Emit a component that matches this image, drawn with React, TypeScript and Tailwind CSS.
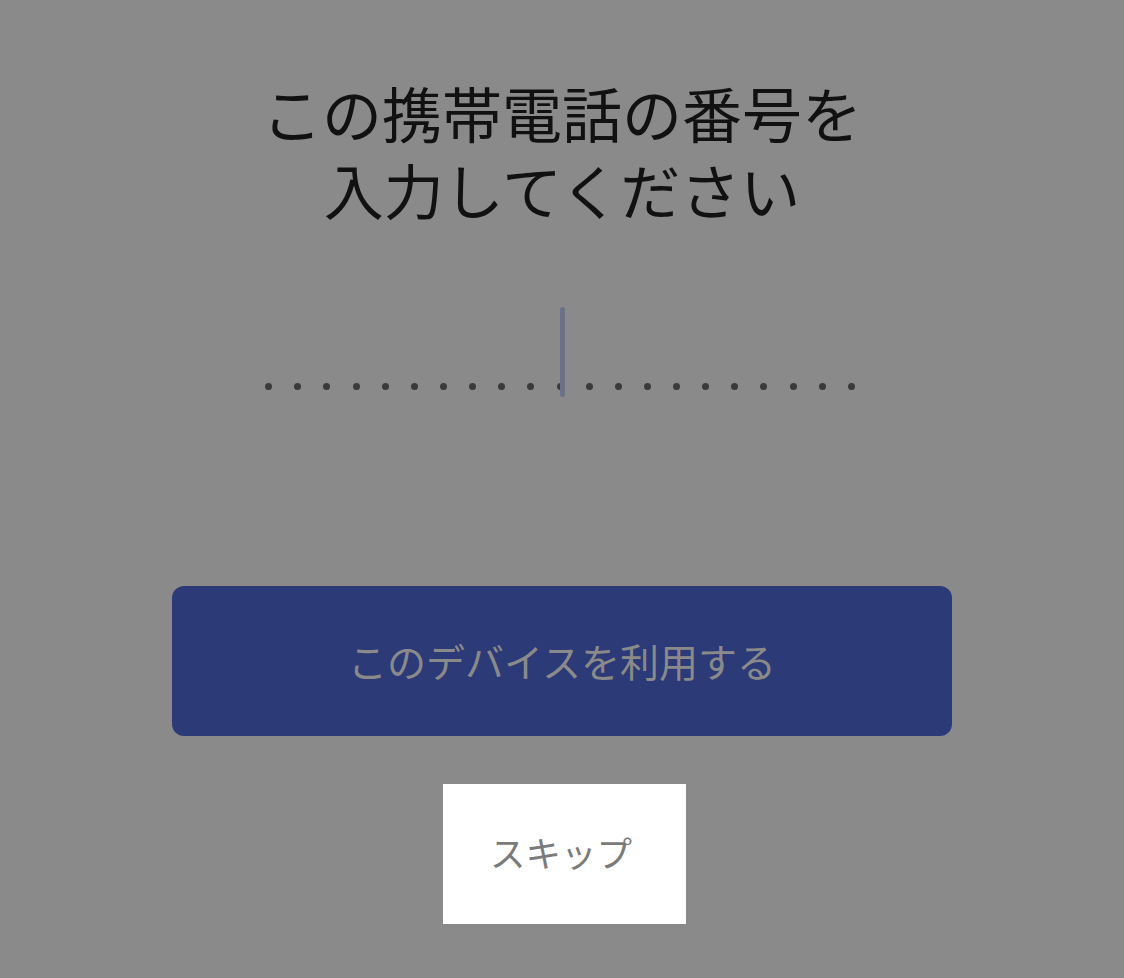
import * as React from 'react';

const DOT_COUNT = 21;

export default function App() {
  const font = { fontFamily: '"Noto Sans CJK JP", "Noto Sans", sans-serif' };

  return (
    <div className="w-[1124px] h-[978px] bg-[#8a8a8a] flex flex-col items-center" style={font}>
      <h1 className="mt-[73px] text-[60px] leading-[77px] text-[#111111] text-center font-normal">
        この携帯電話の番号を
        <br />
        入力してください
      </h1>

      <div className="relative mt-[79px] h-[100px] w-[600px] flex items-end justify-center pr-[4px]">
        <div className="flex items-center gap-[22.15px] mb-[16px]">
          {Array.from({ length: DOT_COUNT }).map((_, i) => (
            <span key={i} className="block w-[7px] h-[7px] rounded-full bg-[#3a3a3a]" />
          ))}
        </div>
        <span className="absolute left-[298px] top-[1px] w-[5px] h-[90px] rounded-full bg-[#6b7189]" />
      </div>

      <button className="mt-[180px] w-[780px] h-[150px] rounded-[12px] bg-[#2c3a78] text-[39px] text-[#8a8a8a] flex items-center justify-center pb-[1px]">
        このデバイスを利用する
      </button>

      <button className="mt-[48px] ml-[4px] w-[243px] h-[140px] bg-white text-[35.5px] text-[#7a7a7a] flex items-center justify-center pb-[5px] pr-[6px]">
        スキップ
      </button>
    </div>
  );
}
